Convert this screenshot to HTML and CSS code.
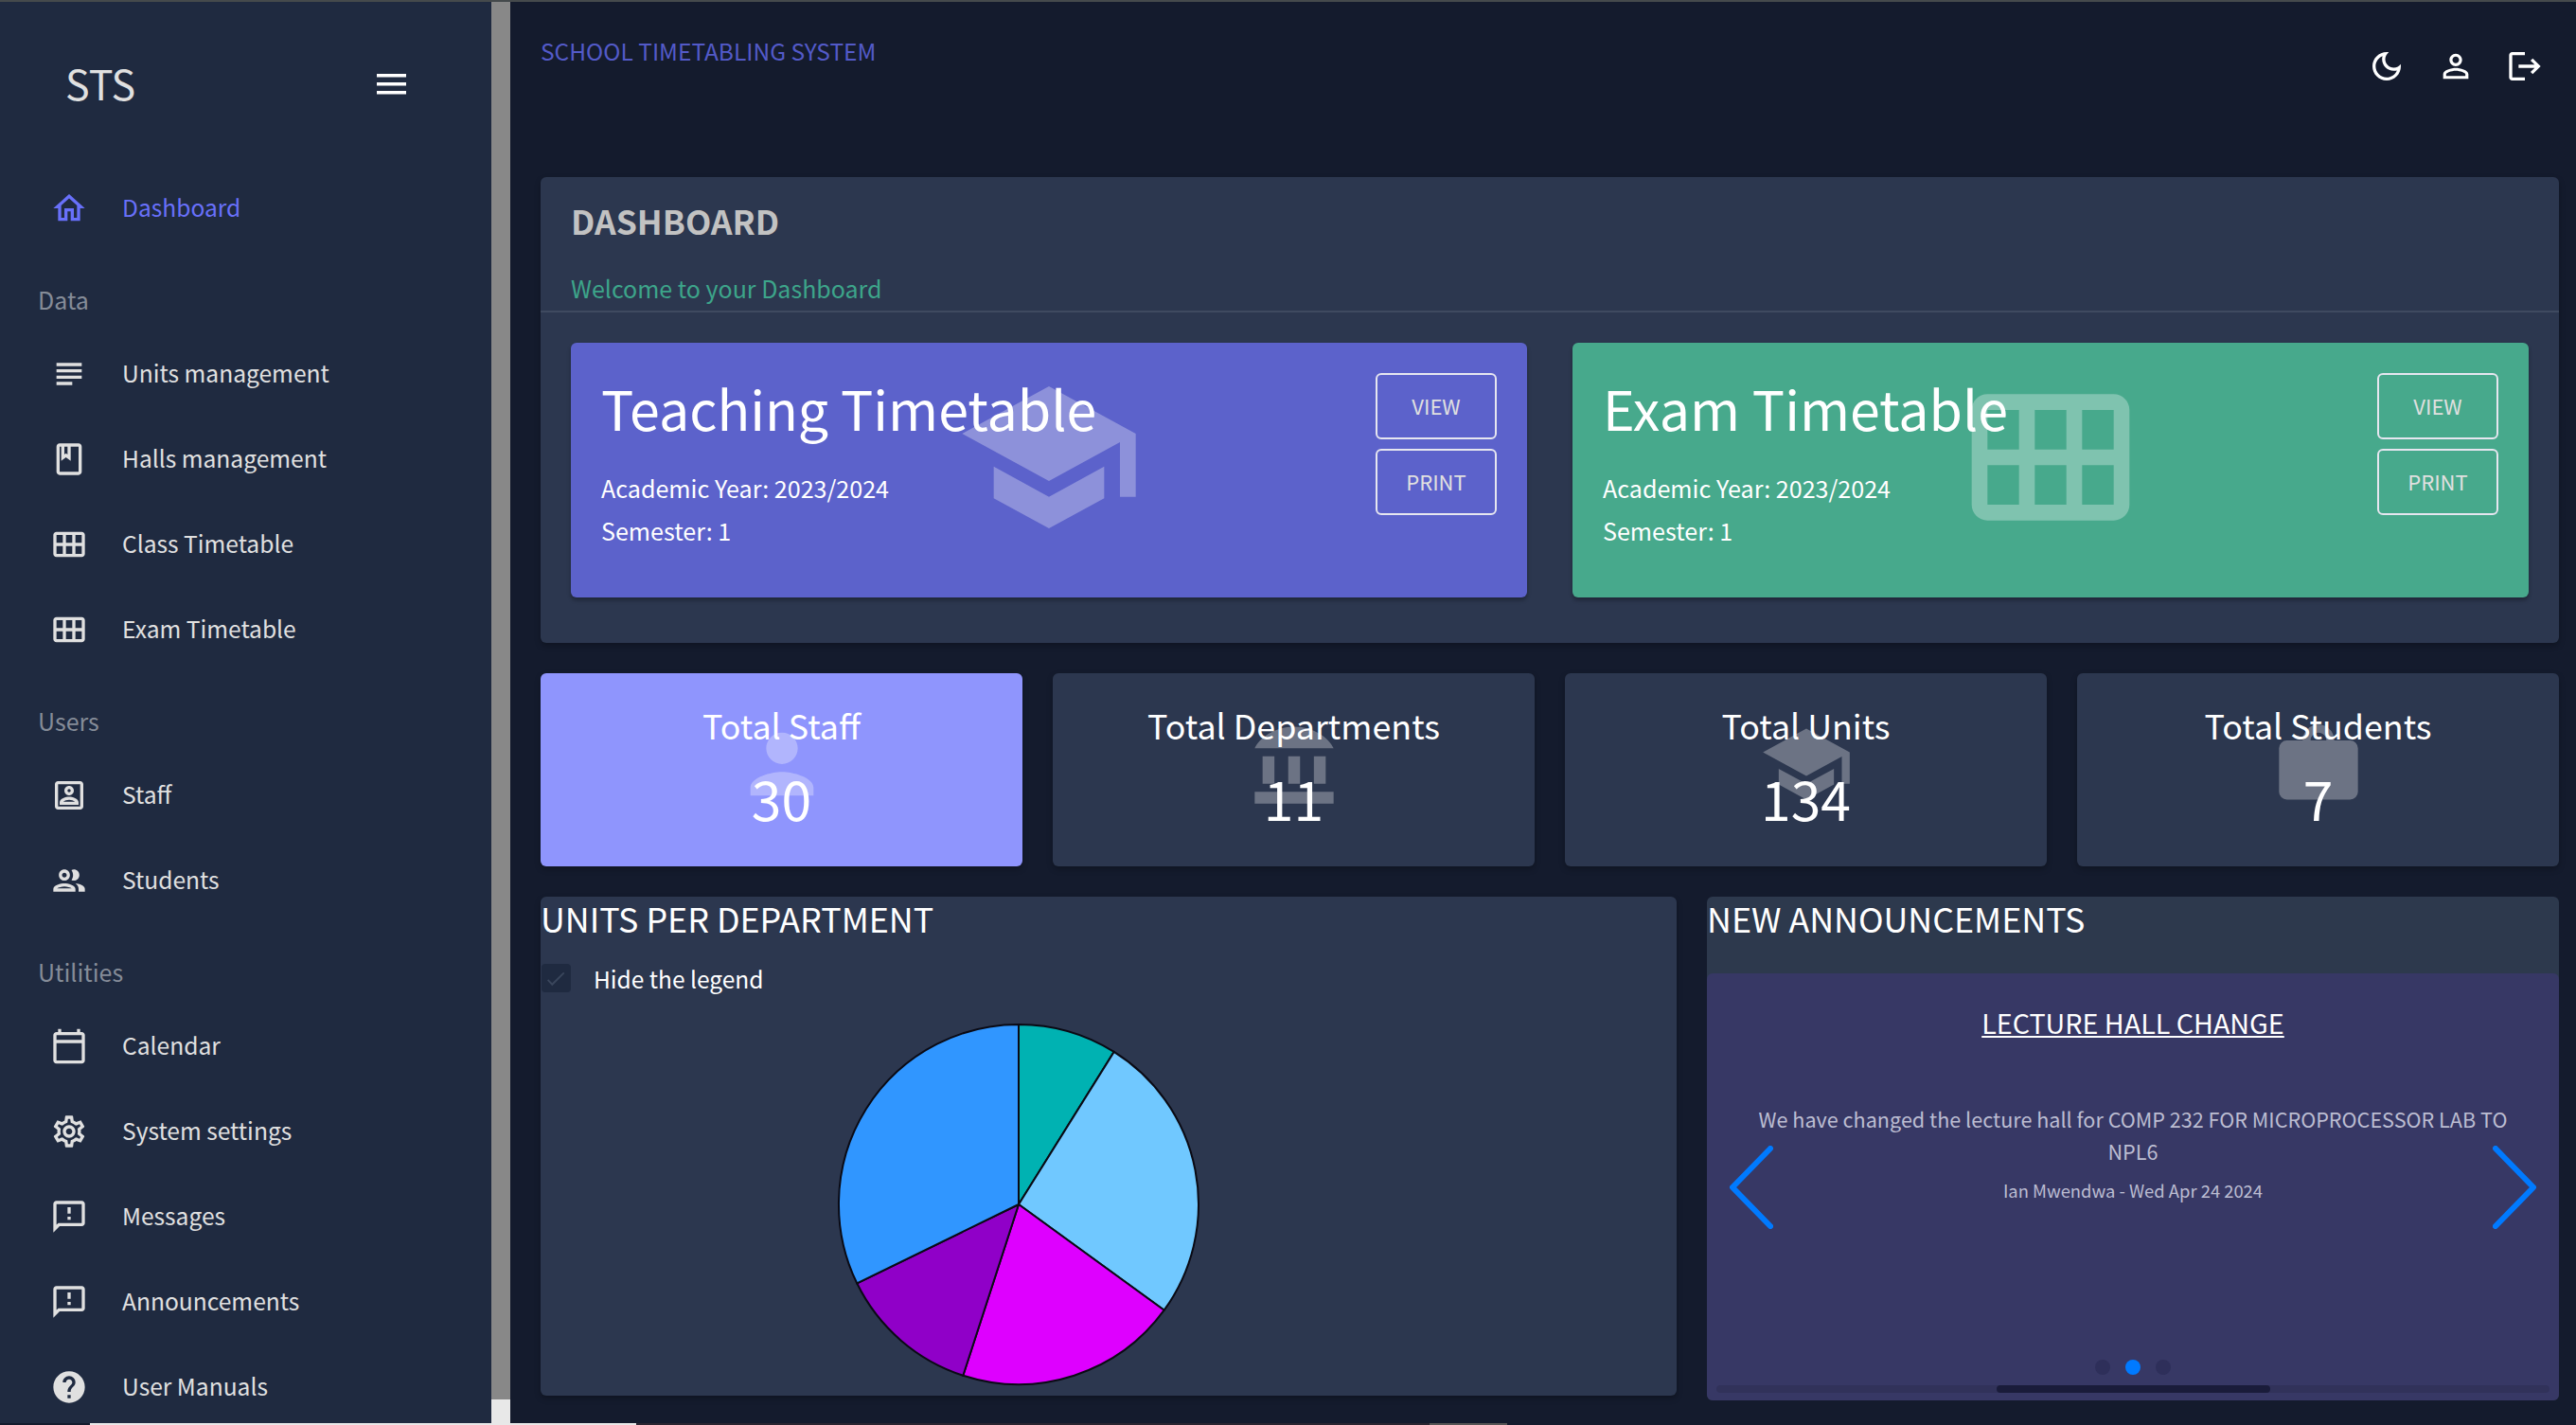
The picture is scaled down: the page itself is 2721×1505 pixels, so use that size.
FILE: index.html
```html
<!DOCTYPE html>
<html lang="en">
<head>
  <meta charset="UTF-8">
  <title>STS Dashboard</title>
  <link rel="stylesheet" href="styles.css">
</head>
<body>
  <div class="top-edge"></div>

  <div class="app">
    <!-- Sidebar -->
    <aside class="sidebar">
      <div class="logo-row">
        <span class="logo">STS</span>
        <svg class="burger" viewBox="0 0 31 22"><path d="M0 0h31v3.6H0zM0 9h31v3.6H0zM0 18h31v3.6H0z"/></svg>
      </div>

      <a class="nav-item active">
        <svg class="nav-icon" viewBox="0 0 24 24"><path d="M12 5.69l5 4.5V18h-2v-6H9v6H7v-7.81l5-4.5M12 3L2 12h3v8h6v-6h2v6h6v-8h3L12 3z"/></svg>
        <span>Dashboard</span>
      </a>

      <div class="nav-label">Data</div>
      <a class="nav-item">
        <svg class="nav-icon" viewBox="0 0 24 24"><path d="M14 17H4v2h10v-2zm6-8H4v2h16V9zM4 15h16v-2H4v2zM4 5v2h16V5H4z"/></svg>
        <span>Units management</span>
      </a>
      <a class="nav-item">
        <svg class="nav-icon" viewBox="0 0 24 24"><path d="M18 2H6c-1.1 0-2 .9-2 2v16c0 1.1.9 2 2 2h12c1.1 0 2-.9 2-2V4c0-1.1-.9-2-2-2zM9 4h2v5l-1-.75L9 9V4zm9 16H6V4h1v9l3-2.25L13 13V4h5v16z"/></svg>
        <span>Halls management</span>
      </a>
      <a class="nav-item">
        <svg class="nav-icon" viewBox="0 0 24 24"><path d="M20 4H4c-1.1 0-2 .9-2 2v12c0 1.1.9 2 2 2h16c1.1 0 2-.9 2-2V6c0-1.1-.9-2-2-2zM8 11H4V6h4v5zm6 0h-4V6h4v5zm6 0h-4V6h4v5zM8 18H4v-5h4v5zm6 0h-4v-5h4v5zm6 0h-4v-5h4v5z"/></svg>
        <span>Class Timetable</span>
      </a>
      <a class="nav-item">
        <svg class="nav-icon" viewBox="0 0 24 24"><path d="M20 4H4c-1.1 0-2 .9-2 2v12c0 1.1.9 2 2 2h16c1.1 0 2-.9 2-2V6c0-1.1-.9-2-2-2zM8 11H4V6h4v5zm6 0h-4V6h4v5zm6 0h-4V6h4v5zM8 18H4v-5h4v5zm6 0h-4v-5h4v5zm6 0h-4v-5h4v5z"/></svg>
        <span>Exam Timetable</span>
      </a>

      <div class="nav-label">Users</div>
      <a class="nav-item">
        <svg class="nav-icon" viewBox="0 0 24 24"><path d="M19 5v14H5V5h14m0-2H5c-1.11 0-2 .9-2 2v14c0 1.1.89 2 2 2h14c1.1 0 2-.9 2-2V5c0-1.1-.9-2-2-2zm-7 9c-1.65 0-3-1.35-3-3s1.35-3 3-3 3 1.35 3 3-1.35 3-3 3zm0-4c-.55 0-1 .45-1 1s.45 1 1 1 1-.45 1-1-.45-1-1-1zm6 10H6v-1.53c0-2.5 3.97-3.58 6-3.58s6 1.08 6 3.58V18zm-9.69-2h7.38c-.69-.56-2.38-1.12-3.69-1.12s-3.01.56-3.69 1.12z"/></svg>
        <span>Staff</span>
      </a>
      <a class="nav-item">
        <svg class="nav-icon" viewBox="0 0 24 24"><path d="M9 13.750c-2.340 0-7 1.170-7 3.500V19h14v-1.750c0-2.330-4.660-3.500-7-3.500zM4.340 17c.84-.58 2.870-1.250 4.660-1.250s3.820.67 4.660 1.250H4.340zM9 12c1.930 0 3.500-1.570 3.500-3.500S10.930 5 9 5 5.500 6.570 5.500 8.500 7.070 12 9 12zm0-5c.83 0 1.500.67 1.500 1.500S9.830 10 9 10s-1.500-.67-1.500-1.500S8.170 7 9 7zm7.040 6.810c1.160.84 1.960 1.960 1.960 3.440V19h4v-1.750c0-2.020-3.500-3.170-5.960-3.440zM15 12c1.930 0 3.500-1.570 3.500-3.500S16.930 5 15 5c-.54 0-1.040.13-1.500.35.630.89 1 1.980 1 3.150s-.37 2.260-1 3.150c.46.220.96.350 1.500.350z"/></svg>
        <span>Students</span>
      </a>

      <div class="nav-label">Utilities</div>
      <a class="nav-item">
        <svg class="nav-icon" viewBox="0 0 24 24"><path d="M20 3h-1V1h-2v2H7V1H5v2H4c-1.100 0-2 .9-2 2v16c0 1.100.9 2 2 2h16c1.100 0 2-.9 2-2V5c0-1.100-.9-2-2-2zm0 18H4V10h16v11zm0-13H4V5h16v3z"/></svg>
        <span>Calendar</span>
      </a>
      <a class="nav-item">
        <svg class="nav-icon" viewBox="0 0 24 24"><path d="M19.430 12.980c.04-.32.07-.64.07-.98 0-.34-.03-.66-.07-.98l2.110-1.650c.19-.15.24-.42.12-.64l-2-3.460c-.12-.22-.39-.3-.61-.22l-2.490 1c-.52-.4-1.080-.73-1.690-.98l-.38-2.650C14.460 2.180 14.250 2 14 2h-4c-.25 0-.46.18-.49.42l-.38 2.650c-.61.25-1.170.59-1.690.98l-2.490-1c-.23-.09-.49 0-.61.22l-2 3.460c-.13.22-.07.49.12.64l2.110 1.650c-.04.32-.07.65-.07.98 0 .33.03.66.07.98l-2.110 1.650c-.19.15-.24.42-.12.64l2 3.460c.12.22.39.3.61.22l2.490-1c.52.4 1.080.73 1.690.98l.38 2.650c.03.24.24.42.49.42h4c.25 0 .46-.18.49-.42l.38-2.650c.61-.25 1.170-.59 1.690-.98l2.490 1c.23.09.49 0 .61-.22l2-3.460c.12-.22.07-.49-.12-.64l-2.110-1.650zM17.450 11.270c.04.31.05.52.05.73 0 .21-.02.43-.05.73l-.14 1.130.89.7 1.080.84-.7 1.210-1.270-.51-1.040-.42-.9.68c-.43.32-.84.56-1.250.73l-1.060.43-.16 1.130-.2 1.350h-1.400l-.19-1.350-.16-1.130-1.060-.43c-.43-.18-.83-.41-1.230-.71l-.91-.7-1.060.43-1.270.51-.7-1.210 1.080-.84.89-.7-.14-1.130c-.03-.31-.05-.54-.05-.74s.02-.43.05-.73l.14-1.130-.89-.7-1.080-.84.7-1.210 1.270.51 1.040.42.9-.68c.43-.32.84-.56 1.250-.73l1.060-.43.16-1.130.2-1.350h1.390l.19 1.350.16 1.130 1.060.43c.43.18.83.41 1.230.71l.91.7 1.060-.43 1.270-.51.7 1.210-1.070.85-.89.7.14 1.130zM12 8c-2.210 0-4 1.790-4 4s1.790 4 4 4 4-1.790 4-4-1.790-4-4-4zm0 6c-1.100 0-2-.9-2-2s.9-2 2-2 2 .9 2 2-.9 2-2 2z"/></svg>
        <span>System settings</span>
      </a>
      <a class="nav-item">
        <svg class="nav-icon" viewBox="0 0 24 24"><path d="M20 2H4c-1.100 0-2 .9-2 2v18l4-4h14c1.100 0 2-.9 2-2V4c0-1.100-.9-2-2-2zm0 14H5.170L4 17.170V4h16v12zM11 12h2v2h-2zm0-6h2v4h-2z"/></svg>
        <span>Messages</span>
      </a>
      <a class="nav-item">
        <svg class="nav-icon" viewBox="0 0 24 24"><path d="M20 2H4c-1.100 0-2 .9-2 2v18l4-4h14c1.100 0 2-.9 2-2V4c0-1.100-.9-2-2-2zm0 14H5.170L4 17.170V4h16v12zM11 12h2v2h-2zm0-6h2v4h-2z"/></svg>
        <span>Announcements</span>
      </a>
      <a class="nav-item">
        <svg class="nav-icon" viewBox="0 0 24 24"><path d="M12 2C6.480 2 2 6.480 2 12s4.480 10 10 10 10-4.480 10-10S17.520 2 12 2zm1 17h-2v-2h2v2zm2.070-7.750l-.9.920C13.450 12.900 13 13.500 13 15h-2v-.5c0-1.100.45-2.100 1.170-2.830l1.240-1.260c.37-.36.590-.86.590-1.410 0-1.100-.9-2-2-2s-2 .9-2 2H8c0-2.210 1.790-4 4-4s4 1.790 4 4c0 .88-.36 1.680-.93 2.250z"/></svg>
        <span>User Manuals</span>
      </a>
    </aside>

    <div class="side-scroll"><div class="side-scroll-end"></div></div>

    <!-- Main content -->
    <main class="main">
      <header class="topbar">
        <span class="system-name">SCHOOL TIMETABLING SYSTEM</span>
        <div class="top-icons">
          <svg viewBox="0 0 24 24"><path d="M9.370 5.510c-.18.64-.27 1.310-.27 1.990 0 4.080 3.320 7.400 7.400 7.400.68 0 1.350-.09 1.990-.27C17.450 17.190 14.930 19 12 19c-3.860 0-7-3.140-7-7 0-2.930 1.810-5.450 4.370-6.490zM12 3c-4.970 0-9 4.030-9 9s4.030 9 9 9 9-4.030 9-9c0-.46-.04-.92-.1-1.360-.98 1.370-2.580 2.260-4.400 2.260-2.980 0-5.400-2.420-5.400-5.400 0-1.810.89-3.420 2.260-4.400-.44-.06-.9-.1-1.360-.1z"/></svg>
          <svg viewBox="0 0 24 24"><path d="M12 5.900c1.160 0 2.100.94 2.100 2.100s-.94 2.100-2.100 2.100S9.900 9.160 9.900 8s.94-2.100 2.100-2.100m0 9c2.970 0 6.100 1.460 6.100 2.100v1.100H5.900V17c0-.64 3.130-2.100 6.100-2.100M12 4C9.790 4 8 5.790 8 8s1.790 4 4 4 4-1.790 4-4-1.790-4-4-4zm0 9c-2.670 0-8 1.340-8 4v3h16v-3c0-2.660-5.330-4-8-4z"/></svg>
          <svg viewBox="0 0 24 24"><path d="M17 7l-1.410 1.410L18.170 11H8v2h10.170l-2.580 2.580L17 17l5-5zM4 5h8V3H4c-1.100 0-2 .9-2 2v14c0 1.100.9 2 2 2h8v-2H4V5z"/></svg>
        </div>
      </header>

      <section class="dash-panel">
        <div class="dash-head">
          <h1>DASHBOARD</h1>
          <p>Welcome to your Dashboard</p>
        </div>
        <div class="hero-row">
          <div class="hero hero-blue">
            <svg class="hero-mark" viewBox="0 0 24 24"><path d="M5 13.180v4L12 21l7-3.820v-4L12 17l-7-3.820zM12 3 1 9l11 6 9-4.910V17h2V9L12 3z"/></svg>
            <div class="hero-text">
              <h2>Teaching Timetable</h2>
              <p>Academic Year: 2023/2024</p>
              <p>Semester: 1</p>
            </div>
            <div class="hero-btns">
              <button>VIEW</button>
              <button>PRINT</button>
            </div>
          </div>
          <div class="hero hero-green">
            <svg class="hero-mark" viewBox="0 0 24 24"><path d="M20 4H4c-1.100 0-2 .9-2 2v12c0 1.100.9 2 2 2h16c1.100 0 2-.9 2-2V6c0-1.100-.9-2-2-2zM8 11H4V6h4v5zm6 0h-4V6h4v5zm6 0h-4V6h4v5zM8 18H4v-5h4v5zm6 0h-4v-5h4v5zm6 0h-4v-5h4v5z"/></svg>
            <div class="hero-text">
              <h2>Exam Timetable</h2>
              <p>Academic Year: 2023/2024</p>
              <p>Semester: 1</p>
            </div>
            <div class="hero-btns">
              <button>VIEW</button>
              <button>PRINT</button>
            </div>
          </div>
        </div>
      </section>

      <section class="stats">
        <div class="stat stat-accent">
          <svg class="stat-mark" viewBox="0 0 24 24"><path d="M12 12c2.210 0 4-1.790 4-4s-1.790-4-4-4-4 1.790-4 4 1.790 4 4 4zm0 2c-2.670 0-8 1.340-8 4v2h16v-2c0-2.660-5.330-4-8-4z"/></svg>
          <h3>Total Staff</h3>
          <div class="stat-num">30</div>
        </div>
        <div class="stat">
          <svg class="stat-mark" viewBox="0 0 24 24"><path d="M4 10v7h3v-7H4zm6.500 0v7h3v-7h-3zM2 22h20v-3H2v3zm15-12v7h3v-7h-3zM12 2.500C7 2.500 3 5.500 2 8h20c-1-2.500-5-5.500-10-5.500z"/></svg>
          <h3>Total Departments</h3>
          <div class="stat-num">11</div>
        </div>
        <div class="stat">
          <svg class="stat-mark" viewBox="0 0 24 24"><path d="M5 13.180v4L12 21l7-3.820v-4L12 17l-7-3.820zM12 3 1 9l11 6 9-4.910V17h2V9L12 3z"/></svg>
          <h3>Total Units</h3>
          <div class="stat-num">134</div>
        </div>
        <div class="stat">
          <svg class="stat-mark" viewBox="0 0 24 24"><path d="M4 6h16a2 2 0 0 1 2 2v11a2 2 0 0 1-2 2H4a2 2 0 0 1-2-2V8a2 2 0 0 1 2-2zM8 6c0-2.200 1.800-4 4-4s4 1.800 4 4h-2c0-1.100-.9-2-2-2s-2 .9-2 2z"/></svg>
          <h3>Total Students</h3>
          <div class="stat-num">7</div>
        </div>
      </section>

      <section class="bottom-row">
        <div class="chart-panel">
          <h3 class="panel-title">UNITS PER DEPARTMENT</h3>
          <label class="legend-toggle">
            <span class="check">
              <svg viewBox="0 0 24 24"><path d="M9 16.200 5.800 13l-1 1L9 18.500 19.500 8l-1-1z"/></svg>
            </span>
            Hide the legend
          </label>
          <svg class="pie" viewBox="-192 -192 384 384">
            <path fill="#00b2b2" d="M0 0V-190A190 190 0 0 1 100.700 -161.100Z"/>
            <path fill="#70c8ff" d="M0 0L100.700 -161.100A190 190 0 0 1 153.700 111.700Z"/>
            <path fill="#de00ff" d="M0 0L153.700 111.700A190 190 0 0 1 -58.700 180.700Z"/>
            <path fill="#9000c8" d="M0 0L-58.700 180.700A190 190 0 0 1 -170.800 83.300Z"/>
            <path fill="#3096ff" d="M0 0L-170.800 83.300A190 190 0 0 1 0 -190Z"/>
          </svg>
        </div>

        <div class="news-panel">
          <h3 class="panel-title">NEW ANNOUNCEMENTS</h3>
          <div class="news-slide">
            <h4>LECTURE HALL CHANGE</h4>
            <p class="news-body">We have changed the lecture hall for COMP 232 FOR MICROPROCESSOR LAB TO NPL6</p>
            <p class="news-meta">Ian Mwendwa - Wed Apr 24 2024</p>

            <svg class="arrow arrow-prev" viewBox="0 0 46 88"><path d="M43 3 3 44l40 41"/></svg>
            <svg class="arrow arrow-next" viewBox="0 0 46 88"><path d="M3 3l40 41L3 85"/></svg>

            <div class="dots">
              <span class="dot"></span>
              <span class="dot on"></span>
              <span class="dot"></span>
            </div>
            <div class="slide-scroll"><div class="slide-thumb"></div></div>
          </div>
        </div>
      </section>
    </main>
  </div>

  <div class="bottom-edge">
    <span class="edge-light"></span>
    <span class="edge-dark"></span>
    <span class="edge-gray"></span>
  </div>
</body>
</html>
```

FILE: styles.css
```css
* {
  box-sizing: border-box;
}

html, body {
  margin: 0;
  height: 1505px;
  overflow: hidden;
}

body {
  font-family: "Noto Sans CJK SC", "Noto Sans", sans-serif;
  background-color: #141b2d;
  color: #e0e0e0;
  display: flex;
  flex-direction: column;
}

h1, h2, h3, h4, p {
  margin: 0;
  font-weight: 400;
}

.top-edge {
  height: 2px;
  background-color: #454a4c;
}

.app {
  flex: 1;
  display: flex;
  min-height: 0;
}

/* Sidebar */
.sidebar {
  width: 519px;
  flex-shrink: 0;
  background-color: #1f2a40;
}

.logo-row {
  height: 70px;
  margin: 52px 0 51px;
  padding: 0 90px 0 69px;
  display: flex;
  align-items: center;
  justify-content: space-between;
}

.logo {
  font-size: 43px;
  line-height: 70px;
  padding-bottom: 4px;
  color: #e0e0e0;
}

.burger {
  width: 31px;
  height: 22px;
  fill: #fff;
}

.nav-item {
  height: 90px;
  padding-left: 53px;
  display: flex;
  align-items: center;
  gap: 36px;
  font-size: 24.6px;
  color: #e0e0e0;
}

.nav-item span {
  padding-bottom: 4px;
}

.nav-item.active {
  color: #6870fa;
}

.nav-icon {
  width: 40px;
  height: 40px;
  fill: currentColor;
  flex-shrink: 0;
}

.nav-label {
  height: 85px;
  padding: 34px 0 0 40px;
  font-size: 25px;
  line-height: 34px;
  color: #858c98;
}

.side-scroll {
  width: 20px;
  flex-shrink: 0;
  background-color: #888;
  position: relative;
}

.side-scroll-end {
  position: absolute;
  left: 0;
  right: 0;
  bottom: 0;
  height: 25px;
  background-color: #e8e8e8;
}

/* Main */
.main {
  flex: 1;
  min-width: 0;
  padding: 0 18px 0 32px;
}

.topbar {
  height: 185px;
  display: flex;
  justify-content: space-between;
  align-items: flex-start;
}

.system-name {
  margin-top: 36px;
  font-size: 24.5px;
  line-height: 32px;
  color: #535ac8;
}

.top-icons {
  display: flex;
  gap: 33px;
  margin: 48px 16px 0 0;
}

.top-icons svg {
  width: 40px;
  height: 40px;
  fill: #fff;
}

.dash-panel {
  height: 492px;
  background-color: #2c374f;
  border-radius: 6px;
  box-shadow: 0 3px 6px rgba(0, 0, 0, 0.25);
}

.dash-head {
  padding: 22px 32px 4px;
  border-bottom: 2px solid #3f4a60;
  margin-bottom: 32px;
}

.dash-head h1 {
  font-size: 35.5px;
  font-weight: 700;
  line-height: 48px;
  color: #c2c2c2;
}

.dash-head p {
  margin-top: 27px;
  font-size: 25px;
  line-height: 40px;
  color: #3da58a;
}

.hero-row {
  display: grid;
  grid-template-columns: 1fr 1fr;
  gap: 48px;
  padding: 0 32px;
}

.hero {
  position: relative;
  height: 269px;
  padding: 30px 32px 32px;
  border-radius: 6px;
  display: flex;
  justify-content: space-between;
  box-shadow: 0 3px 4px rgba(0, 0, 0, 0.3);
  color: #fff;
}

.hero-blue {
  background-color: #5c62cb;
}

.hero-green {
  background-color: #47a98c;
}

.hero-mark {
  position: absolute;
  left: 50%;
  top: 21px;
  width: 200px;
  height: 200px;
  margin-left: -100px;
  fill: #fff;
  opacity: 0.3;
}

.hero-text {
  position: relative;
}

.hero-text h2 {
  font-size: 57.3px;
  line-height: 78px;
  margin-bottom: 23px;
}

.hero-text p {
  font-size: 25.1px;
  line-height: 45px;
}

.hero-btns {
  position: relative;
  display: flex;
  flex-direction: column;
  gap: 10px;
  margin-top: 2px;
}

.hero-btns button {
  width: 128px;
  height: 70px;
  padding-bottom: 4px;
  background: transparent;
  border: 2px solid #e6e6f0;
  border-radius: 6px;
  color: #e0e0e0;
  font-family: inherit;
  font-size: 22px;
}

.stats {
  display: grid;
  grid-template-columns: repeat(4, 1fr);
  gap: 32px;
  margin-top: 32px;
}

.stat {
  position: relative;
  height: 204px;
  padding-top: 29px;
  background-color: #2c374f;
  border-radius: 6px;
  text-align: center;
  color: #fff;
  box-shadow: 0 3px 6px rgba(0, 0, 0, 0.25);
}

.stat-accent {
  background-color: #8f95fd;
}

.stat-mark {
  position: absolute;
  left: 50%;
  top: 46px;
  width: 100px;
  height: 100px;
  margin-left: -50px;
  fill: #fff;
  opacity: 0.3;
}

.stat h3 {
  position: relative;
  font-size: 35.8px;
  line-height: 50px;
}

.stat-num {
  position: relative;
  margin-top: 12px;
  font-size: 57px;
  line-height: 80px;
}

.bottom-row {
  display: grid;
  grid-template-columns: 4fr 3fr;
  gap: 32px;
  margin-top: 32px;
  align-items: start;
}

.panel-title {
  font-size: 35.8px;
  line-height: 44px;
  color: #fff;
}

.chart-panel {
  height: 527px;
  background-color: #2c374f;
  border-radius: 6px;
  box-shadow: 0 3px 6px rgba(0, 0, 0, 0.25);
}

.legend-toggle {
  margin-top: 27px;
  display: flex;
  align-items: center;
  gap: 24px;
  height: 30px;
  font-size: 24.5px;
  color: #fff;
}

.check {
  width: 31px;
  height: 30px;
  background-color: #1f2a40;
  border-radius: 4px;
  margin-left: 1px;
}

.check svg {
  display: block;
  width: 30px;
  height: 30px;
  fill: #3a465c;
}

.pie {
  display: block;
  width: 384px;
  height: 384px;
  margin: 32px 0 0 313px;
}

.pie path {
  stroke: #0a0a14;
  stroke-width: 2;
}

.news-panel {
  height: 532px;
  background-color: #2d394d;
  border-radius: 6px;
}

.news-panel .panel-title {
  margin-bottom: 37px;
}

.news-slide {
  position: relative;
  height: 451px;
  padding: 33px 36px 0;
  background-color: #373865;
  border-radius: 6px;
  text-align: center;
}

.news-slide h4 {
  font-size: 28.7px;
  line-height: 38px;
  color: #fff;
  text-decoration: underline;
}

.news-body {
  margin-top: 66px;
  font-size: 21.6px;
  line-height: 34px;
  color: #bcbdd2;
}

.news-meta {
  margin-top: 9px;
  font-size: 18.4px;
  line-height: 30px;
  color: #bcbdd2;
}

.arrow {
  position: absolute;
  top: 182px;
  width: 46px;
  height: 88px;
  fill: none;
  stroke: #007aff;
  stroke-width: 6;
  stroke-linecap: round;
  stroke-linejoin: round;
}

.arrow-prev {
  left: 24px;
}

.arrow-next {
  right: 24px;
}

.dots {
  position: absolute;
  left: 0;
  right: 0;
  bottom: 27px;
  display: flex;
  justify-content: center;
  gap: 16px;
}

.dot {
  width: 16px;
  height: 16px;
  border-radius: 50%;
  background-color: #2e2f5a;
}

.dot.on {
  background-color: #007aff;
}

.slide-scroll {
  position: absolute;
  left: 10px;
  right: 10px;
  bottom: 8px;
  height: 8px;
  border-radius: 4px;
  background-color: rgba(0, 0, 0, 0.1);
}

.slide-thumb {
  width: 289px;
  height: 8px;
  margin-left: 296px;
  border-radius: 4px;
  background-color: #1a1c3a;
}

.bottom-edge {
  height: 2px;
  display: flex;
  padding-left: 95px;
  background-color: #141b2d;
}

.edge-light {
  width: 577px;
  background-color: #e8e8e8;
}

.edge-dark {
  width: 838px;
  background-color: #2a2530;
}

.edge-gray {
  width: 82px;
  background-color: #555;
}
```
